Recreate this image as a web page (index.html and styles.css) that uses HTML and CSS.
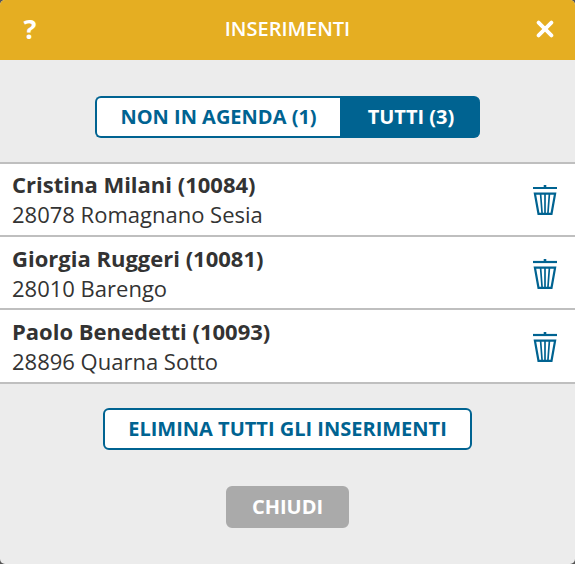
FILE: index.html
```html
<!DOCTYPE html>
<html lang="it">
<head>
<meta charset="utf-8">
<title>Inserimenti</title>
<link rel="stylesheet" href="styles.css">
</head>
<body>
<svg class="symbols" aria-hidden="true">
  <symbol id="trash" viewBox="0 0 24 33">
    <path d="M0 5h24" stroke-width="2.2"/>
    <path d="M12 2v3" stroke-width="2.6"/>
    <path d="M1.9 10.7h20.2L18.5 30.8H5.5z" stroke-width="2.2"/>
    <path d="M7.6 11l1.5 19.5M12 11v19.5M16.4 11l-1.5 19.5" stroke-width="1.7"/>
  </symbol>
</svg>
<main class="dialog">
  <header class="header">
    <span class="help">?</span>
    <h1 class="title">INSERIMENTI</h1>
    <svg class="close" viewBox="0 0 18 18"><path d="M2.6 2.6l12.8 12.8M15.4 2.6l-12.8 12.8"/></svg>
  </header>
  <nav class="tabs">
    <button class="tab"><span>NON IN AGENDA (1)</span></button>
    <button class="tab active"><span>TUTTI (3)</span></button>
  </nav>
  <ul class="list">
    <li class="row"><div><div class="name"><span>Cristina Milani (10084)</span></div><div class="place"><span>28078 Romagnano Sesia</span></div></div><svg class="trash"><use href="#trash"/></svg></li>
    <li class="row"><div><div class="name"><span>Giorgia Ruggeri (10081)</span></div><div class="place"><span>28010 Barengo</span></div></div><svg class="trash"><use href="#trash"/></svg></li>
    <li class="row"><div><div class="name"><span>Paolo Benedetti (10093)</span></div><div class="place"><span>28896 Quarna Sotto</span></div></div><svg class="trash"><use href="#trash"/></svg></li>
  </ul>
  <div class="actions">
    <button class="button outline">ELIMINA TUTTI GLI INSERIMENTI</button>
    <button class="button muted">CHIUDI</button>
  </div>
</main>
</body>
</html>
```
FILE: styles.css
```css
* { box-sizing: border-box; }
body { margin: 0; background: #555; font-family: "Open Sans", sans-serif; color: #333; }
.symbols { display: none; }
.dialog { width: 575px; height: 564px; background: #ececec; border-radius: 5px; overflow: hidden; }
.header { height: 60px; padding: 0 21px 2px; background: #e5ae22; color: #fff; display: flex; align-items: center; justify-content: space-between; }
.help { width: 18px; text-align: center; font-size: 27px; font-weight: 700; line-height: 56px; }
.title { margin: 0; font-size: 20px; font-weight: 600; line-height: 56px; }
.close { width: 18px; height: 18px; fill: none; stroke: #fff; stroke-width: 3.8; stroke-linecap: round; }
.tabs { display: flex; justify-content: center; margin-top: 36px; }
button { font-family: inherit; font-weight: 700; font-size: 20px; line-height: 38px; height: 42px; padding: 0; border: 2px solid #006391; color: #006391; background: #fff; white-space: nowrap; }
.tab { width: 245px; border-right: 0; border-radius: 6px 0 0 6px; }
.tab.active { width: 140px; background: #006391; color: #fff; border-radius: 0 6px 6px 0; }
.list { list-style: none; margin: 24px 0 0; padding: 0; border-top: 2px solid #bfbfbf; background: #fff; }
.row { height: 73px; padding: 6px 18px 5px 12px; border-bottom: 2px solid #bfbfbf; display: flex; justify-content: space-between; align-items: flex-start; }
.row:first-child { padding-top: 5px; }
.row:last-child { height: 74px; }
.name, .place { font-size: 22px; line-height: 30px; white-space: nowrap; }
.name { font-weight: 700; }
.trash { width: 24px; height: 33px; margin-top: 14px; fill: none; stroke: #006391; }
.actions { display: flex; flex-direction: column; align-items: center; gap: 36px; margin-top: 24px; }
.button { border-radius: 6px; }
.outline { width: 369px; }
.muted { width: 123px; background: #aaa; border-color: #aaa; color: #fff; }
```
